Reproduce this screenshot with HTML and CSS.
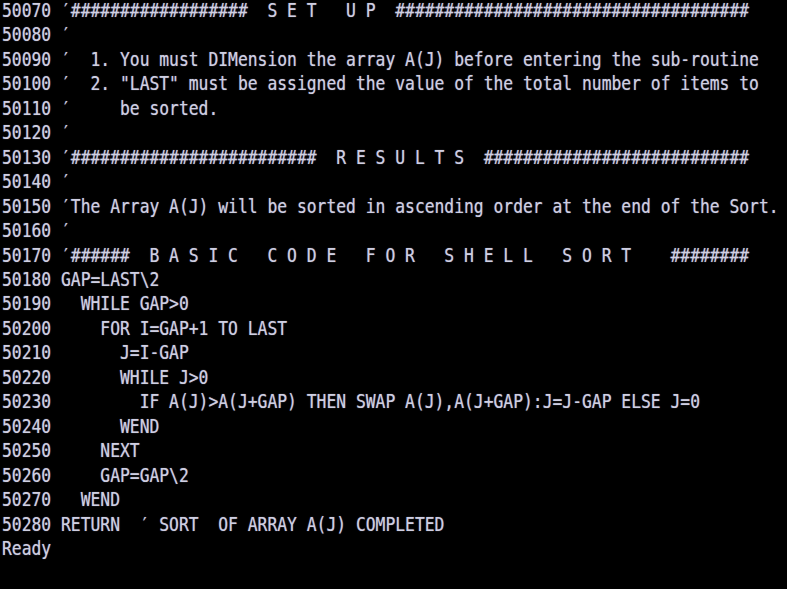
FILE: index.html
```html
<!DOCTYPE html>
<html lang="en">
<head>
<meta charset="utf-8">
<title>BASIC - Shell Sort</title>
<link rel="stylesheet" href="styles.css">
</head>
<body>
<main class="screen">
<pre class="listing">50070 ′##################  S E T   U P  ####################################
50080 ′
50090 ′  1. You must DIMension the array A(J) before entering the sub-routine
50100 ′  2. "LAST" must be assigned the value of the total number of items to
50110 ′     be sorted.
50120 ′
50130 ′#########################  R E S U L T S  ###########################
50140 ′
50150 ′The Array A(J) will be sorted in ascending order at the end of the Sort.
50160 ′
50170 ′######  B A S I C   C O D E   F O R   S H E L L   S O R T    ########
50180 GAP=LAST\2
50190   WHILE GAP>0
50200     FOR I=GAP+1 TO LAST
50210       J=I-GAP
50220       WHILE J>0
50230         IF A(J)>A(J+GAP) THEN SWAP A(J),A(J+GAP):J=J-GAP ELSE J=0
50240       WEND
50250     NEXT
50260     GAP=GAP\2
50270   WEND
50280 RETURN  ′ SORT  OF ARRAY A(J) COMPLETED
Ready</pre>
</main>
</body>
</html>
```
FILE: styles.css
```css
html, body {
  margin: 0;
  padding: 0;
  background: #000;
}

body {
  width: 787px;
  height: 589px;
  overflow: hidden;
}

.screen {
  padding-left: 2px;
  margin-top: -1px;
}

.listing {
  margin: 0;
  font-family: "DejaVu Sans Mono", "Liberation Mono", monospace;
  font-size: 16.34px;
  line-height: 21.46px;
  white-space: pre;
  color: #cfcfe2;
  text-shadow: 0 0 1px rgba(200, 200, 235, 0.6);
  transform: scaleY(1.14);
  transform-origin: 0 0;
}
```
